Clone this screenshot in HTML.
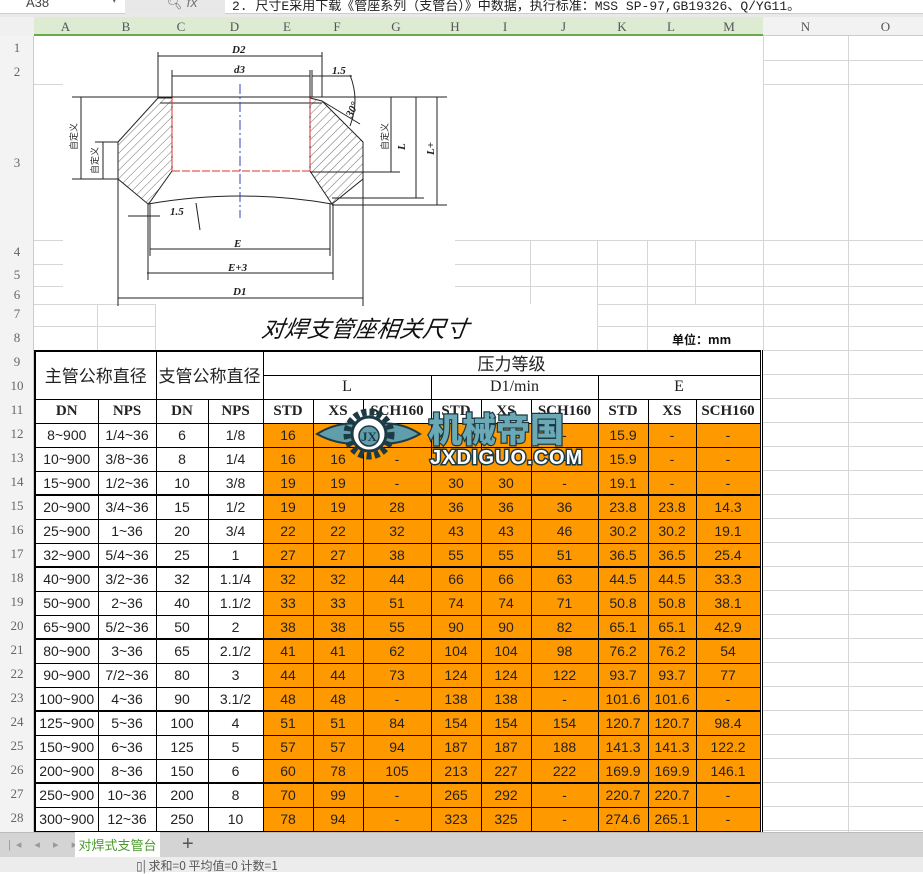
<!DOCTYPE html>
<html><head><meta charset="utf-8">
<style>
*{margin:0;padding:0;box-sizing:border-box}
body{width:923px;height:872px;overflow:hidden;background:#fff;position:relative;font-family:"Liberation Sans","Noto Sans CJK SC",sans-serif}
.abs{position:absolute}
.gl{position:absolute;background:#d6d6d6}
table{border-collapse:collapse;table-layout:fixed;position:absolute;left:34px;top:350px;border:2px solid #000;border-right:3px double #000}
td{border:1px solid #000;height:24px;line-height:18px;text-align:center;font-size:14px;color:#222;white-space:nowrap;overflow:hidden;padding:0;font-family:"Liberation Sans","Noto Sans CJK SC",sans-serif}
td.o{background:#FF9900}
.h1{font-size:17px;line-height:18px;font-family:"Noto Sans CJK SC",sans-serif}
.hs{font-family:"Liberation Serif",serif;font-size:15px;font-weight:bold}
.hl{font-family:"Liberation Serif",serif;font-size:16px}
tr.t td{border-top:2px solid #000}
.rh{position:absolute;left:0;width:34px;text-align:center;font-size:13px;color:#666;font-family:"Liberation Serif",serif}
.ch{position:absolute;top:17px;height:19px;text-align:center;font-size:13px;color:#555;font-family:"Liberation Serif",serif;line-height:19px}
</style></head><body>
<div class="abs" style="left:0;top:0;width:923px;height:14px;background:#fff;border-bottom:1px solid #ccc"></div>
<div class="abs" style="left:125px;top:0;width:100px;height:14px;background:#e8e8e8"></div>
<div class="abs" style="left:26px;top:-5px;font-size:13px;color:#444">A38</div>
<div class="abs" style="left:112px;top:-5px;font-size:9px;color:#666">▾</div>
<div class="abs" style="left:165px;top:-6px;font-size:14px;color:#777;font-style:italic">🔍︎ fx</div>
<div class="abs" style="left:232px;top:-5px;font-size:13px;color:#222;font-family:'Liberation Mono','Noto Sans CJK SC',monospace;white-space:nowrap">2. 尺寸E采用下载《管座系列（支管台）》中数据，执行标准：MSS SP-97,GB19326、Q/YG11。</div>
<div class="abs" style="left:0;top:14px;width:923px;height:3px;background:#e9e9e9"></div>
<div class="abs" style="left:0;top:17px;width:34px;height:19px;background:#f0f0f0"></div>
<div class="abs" style="left:34px;top:17px;width:729px;height:19px;background:#dcebd1;border-bottom:2px solid #6aa84f"></div>
<div class="abs" style="left:763px;top:17px;width:160px;height:19px;background:#f2f2f2;border-bottom:1px solid #ccc"></div>
<div class="ch" style="left:34px;width:63px">A</div><div class="ch" style="left:97px;width:58px">B</div><div class="ch" style="left:155px;width:52px">C</div><div class="ch" style="left:207px;width:55px">D</div><div class="ch" style="left:262px;width:50px">E</div><div class="ch" style="left:312px;width:50px">F</div><div class="ch" style="left:362px;width:68px">G</div><div class="ch" style="left:430px;width:50px">H</div><div class="ch" style="left:480px;width:50px">I</div><div class="ch" style="left:530px;width:67px">J</div><div class="ch" style="left:597px;width:50px">K</div><div class="ch" style="left:647px;width:48px">L</div><div class="ch" style="left:695px;width:68px">M</div><div class="ch" style="left:763px;width:85px">N</div><div class="ch" style="left:848px;width:75px">O</div>
<div class="abs" style="left:0;top:36px;width:34px;height:796px;background:#f3f3f3;border-right:1px solid #ccc"></div>
<div class="rh" style="top:40px">1</div><div class="rh" style="top:64px">2</div><div class="rh" style="top:155px">3</div><div class="rh" style="top:244px">4</div><div class="rh" style="top:267px">5</div><div class="rh" style="top:287px">6</div><div class="rh" style="top:306px">7</div><div class="rh" style="top:330px">8</div>
<div class="rh" style="top:354px">9</div><div class="rh" style="top:378px">10</div><div class="rh" style="top:402px">11</div>
<div class="rh" style="top:426px">12</div><div class="rh" style="top:450px">13</div><div class="rh" style="top:474px">14</div><div class="rh" style="top:498px">15</div><div class="rh" style="top:522px">16</div><div class="rh" style="top:546px">17</div><div class="rh" style="top:570px">18</div><div class="rh" style="top:594px">19</div><div class="rh" style="top:618px">20</div><div class="rh" style="top:642px">21</div><div class="rh" style="top:666px">22</div><div class="rh" style="top:690px">23</div><div class="rh" style="top:714px">24</div><div class="rh" style="top:738px">25</div><div class="rh" style="top:762px">26</div><div class="rh" style="top:786px">27</div><div class="rh" style="top:810px">28</div>
<div class="gl" style="left:848px;top:36px;width:1px;height:796px"></div>
<div class="gl" style="left:763px;top:36px;width:1px;height:314px"></div>
<div class="gl" style="left:763px;top:60px;width:160px;height:1px"></div><div class="gl" style="left:763px;top:84px;width:160px;height:1px"></div>
<div class="gl" style="left:455px;top:240px;width:468px;height:1px"></div><div class="gl" style="left:455px;top:264px;width:468px;height:1px"></div><div class="gl" style="left:455px;top:286px;width:468px;height:1px"></div><div class="gl" style="left:597px;top:304px;width:326px;height:1px"></div><div class="gl" style="left:597px;top:326px;width:326px;height:1px"></div>
<div class="gl" style="left:34px;top:304px;width:121px;height:1px"></div><div class="gl" style="left:34px;top:326px;width:121px;height:1px"></div>
<div class="gl" style="left:97px;top:304px;width:1px;height:46px"></div><div class="gl" style="left:155px;top:304px;width:1px;height:46px"></div>
<div class="gl" style="left:34px;top:84px;width:29px;height:1px"></div><div class="gl" style="left:34px;top:240px;width:29px;height:1px"></div><div class="gl" style="left:34px;top:264px;width:29px;height:1px"></div><div class="gl" style="left:34px;top:286px;width:29px;height:1px"></div>
<div class="gl" style="left:530px;top:240px;width:1px;height:64px"></div><div class="gl" style="left:597px;top:240px;width:1px;height:110px"></div><div class="gl" style="left:647px;top:240px;width:1px;height:110px"></div><div class="gl" style="left:695px;top:240px;width:1px;height:64px"></div>
<div class="gl" style="left:763px;top:350px;width:160px;height:1px"></div>
<div class="gl" style="left:763px;top:374px;width:160px;height:1px"></div><div class="gl" style="left:763px;top:398px;width:160px;height:1px"></div><div class="gl" style="left:763px;top:422px;width:160px;height:1px"></div><div class="gl" style="left:763px;top:446px;width:160px;height:1px"></div><div class="gl" style="left:763px;top:470px;width:160px;height:1px"></div><div class="gl" style="left:763px;top:494px;width:160px;height:1px"></div><div class="gl" style="left:763px;top:518px;width:160px;height:1px"></div><div class="gl" style="left:763px;top:542px;width:160px;height:1px"></div><div class="gl" style="left:763px;top:566px;width:160px;height:1px"></div><div class="gl" style="left:763px;top:590px;width:160px;height:1px"></div><div class="gl" style="left:763px;top:614px;width:160px;height:1px"></div><div class="gl" style="left:763px;top:638px;width:160px;height:1px"></div><div class="gl" style="left:763px;top:662px;width:160px;height:1px"></div><div class="gl" style="left:763px;top:686px;width:160px;height:1px"></div><div class="gl" style="left:763px;top:710px;width:160px;height:1px"></div><div class="gl" style="left:763px;top:734px;width:160px;height:1px"></div><div class="gl" style="left:763px;top:758px;width:160px;height:1px"></div><div class="gl" style="left:763px;top:782px;width:160px;height:1px"></div><div class="gl" style="left:763px;top:806px;width:160px;height:1px"></div><div class="gl" style="left:763px;top:830px;width:160px;height:1px"></div>
<svg class="abs" style="left:0;top:0" width="923" height="350" viewBox="0 0 923 350">
<defs><pattern id="h" width="6" height="6" patternUnits="userSpaceOnUse" patternTransform="rotate(45)"><line x1="0" y1="0" x2="0" y2="6" stroke="#333" stroke-width="0.7"/></pattern></defs>
<g stroke="#222" stroke-width="1" fill="none">
<polygon points="158,98 172,98 172,171 150,202 148,204 118,179 118,142" fill="url(#h)"/>
<polygon points="310,98 322,101 363,142 363,179 332,204 310,171" fill="url(#h)"/>
<path d="M148,204 Q240,188 332,204"/>
<line x1="72" y1="97" x2="447" y2="97"/><line x1="160" y1="103" x2="322" y2="103"/>
<line x1="72" y1="179" x2="118" y2="179"/><line x1="310" y1="172" x2="400" y2="172"/>
<line x1="332" y1="198" x2="424" y2="198"/><line x1="332" y1="205" x2="447" y2="205"/>
<line x1="158" y1="52" x2="158" y2="97"/><line x1="322" y1="52" x2="322" y2="97"/>
<line x1="172" y1="70" x2="172" y2="97"/><line x1="310" y1="70" x2="310" y2="97"/><line x1="312" y1="70" x2="312" y2="97"/>
<line x1="158" y1="56" x2="322" y2="56"/><line x1="172" y1="76" x2="310" y2="76"/><line x1="312" y1="76" x2="352" y2="76"/>
<line x1="81" y1="97" x2="81" y2="179"/><line x1="103" y1="142" x2="103" y2="179"/><line x1="95" y1="142" x2="118" y2="142"/>
<line x1="391" y1="97" x2="391" y2="172"/><line x1="416" y1="97" x2="416" y2="198"/><line x1="437" y1="97" x2="437" y2="205"/>
<line x1="148" y1="204" x2="148" y2="280"/><line x1="150" y1="204" x2="150" y2="256"/><line x1="330" y1="204" x2="330" y2="256"/><line x1="333" y1="204" x2="333" y2="280"/>
<line x1="118" y1="179" x2="118" y2="306"/><line x1="363" y1="179" x2="363" y2="306"/>
<line x1="150" y1="249" x2="330" y2="249"/><line x1="147" y1="273" x2="333" y2="273"/><line x1="118" y1="298" x2="363" y2="298"/>
<line x1="128" y1="216" x2="160" y2="216"/>
<line x1="196" y1="203" x2="200" y2="230"/>
<path d="M350,75 Q360,100 350,126"/><line x1="322" y1="101" x2="360" y2="124"/>
</g>
<g stroke="#e03030" stroke-width="1" stroke-dasharray="8,2"><line x1="172" y1="98" x2="172" y2="171"/><line x1="310" y1="98" x2="310" y2="171"/><line x1="172" y1="171" x2="310" y2="171"/></g>
<line x1="240" y1="84" x2="240" y2="218" stroke="#3040c0" stroke-dasharray="10,3,2,3"/>
<g font-family="Liberation Serif,serif" font-style="italic" font-weight="bold" font-size="11" fill="#222">
<text x="232" y="53">D2</text><text x="234" y="73">d3</text><text x="332" y="74">1.5</text><text x="170" y="215">1.5</text>
<text x="234" y="247">E</text><text x="228" y="271">E+3</text><text x="233" y="295">D1</text>
<text x="405" y="150" transform="rotate(-90 405,150)">L</text><text x="434" y="155" transform="rotate(-90 434,155)">L+</text>
<text x="352" y="118" transform="rotate(-65 352,118)">30°</text>
</g>
<g font-family="Noto Sans CJK SC,sans-serif" font-size="9" fill="#222">
<text x="77" y="150" transform="rotate(-90 77,150)">自定义</text><text x="98" y="174" transform="rotate(-90 98,174)">自定义</text><text x="388" y="150" transform="rotate(-90 388,150)">自定义</text>
</g>
<text x="262" y="337" font-family="Noto Sans CJK SC,sans-serif" font-style="italic" font-size="23" fill="#111" transform="skewX(-8) translate(46,0)">对焊支管座相关尺寸</text>
<text x="672" y="344" font-family="Noto Sans CJK SC,sans-serif" font-weight="bold" font-size="12" fill="#111">单位：mm</text>
</svg>
<table>
<colgroup><col style="width:63px"><col style="width:58px"><col style="width:52px"><col style="width:55px"><col style="width:50px"><col style="width:50px"><col style="width:68px"><col style="width:50px"><col style="width:50px"><col style="width:67px"><col style="width:50px"><col style="width:48px"><col style="width:65px"></colgroup>
<tr><td class="h1" colspan="2" rowspan="2">主管公称直径</td><td class="h1" colspan="2" rowspan="2">支管公称直径</td><td class="h1" colspan="9">压力等级</td></tr>
<tr><td class="hl" colspan="3">L</td><td class="hl" colspan="3">D1/min</td><td class="hl" colspan="3">E</td></tr>
<tr><td class="hs">DN</td><td class="hs">NPS</td><td class="hs">DN</td><td class="hs">NPS</td><td class="hs">STD</td><td class="hs">XS</td><td class="hs">SCH160</td><td class="hs">STD</td><td class="hs">XS</td><td class="hs">SCH160</td><td class="hs">STD</td><td class="hs">XS</td><td class="hs">SCH160</td></tr>
<tr><td>8~900</td><td>1/4~36</td><td>6</td><td>1/8</td><td class="o">16</td><td class="o">16</td><td class="o">-</td><td class="o"></td><td class="o"></td><td class="o">-</td><td class="o">15.9</td><td class="o">-</td><td class="o">-</td></tr>
<tr><td>10~900</td><td>3/8~36</td><td>8</td><td>1/4</td><td class="o">16</td><td class="o">16</td><td class="o">-</td><td class="o"></td><td class="o"></td><td class="o">-</td><td class="o">15.9</td><td class="o">-</td><td class="o">-</td></tr>
<tr><td>15~900</td><td>1/2~36</td><td>10</td><td>3/8</td><td class="o">19</td><td class="o">19</td><td class="o">-</td><td class="o">30</td><td class="o">30</td><td class="o">-</td><td class="o">19.1</td><td class="o">-</td><td class="o">-</td></tr>
<tr class="t"><td>20~900</td><td>3/4~36</td><td>15</td><td>1/2</td><td class="o">19</td><td class="o">19</td><td class="o">28</td><td class="o">36</td><td class="o">36</td><td class="o">36</td><td class="o">23.8</td><td class="o">23.8</td><td class="o">14.3</td></tr>
<tr><td>25~900</td><td>1~36</td><td>20</td><td>3/4</td><td class="o">22</td><td class="o">22</td><td class="o">32</td><td class="o">43</td><td class="o">43</td><td class="o">46</td><td class="o">30.2</td><td class="o">30.2</td><td class="o">19.1</td></tr>
<tr><td>32~900</td><td>5/4~36</td><td>25</td><td>1</td><td class="o">27</td><td class="o">27</td><td class="o">38</td><td class="o">55</td><td class="o">55</td><td class="o">51</td><td class="o">36.5</td><td class="o">36.5</td><td class="o">25.4</td></tr>
<tr class="t"><td>40~900</td><td>3/2~36</td><td>32</td><td>1.1/4</td><td class="o">32</td><td class="o">32</td><td class="o">44</td><td class="o">66</td><td class="o">66</td><td class="o">63</td><td class="o">44.5</td><td class="o">44.5</td><td class="o">33.3</td></tr>
<tr><td>50~900</td><td>2~36</td><td>40</td><td>1.1/2</td><td class="o">33</td><td class="o">33</td><td class="o">51</td><td class="o">74</td><td class="o">74</td><td class="o">71</td><td class="o">50.8</td><td class="o">50.8</td><td class="o">38.1</td></tr>
<tr><td>65~900</td><td>5/2~36</td><td>50</td><td>2</td><td class="o">38</td><td class="o">38</td><td class="o">55</td><td class="o">90</td><td class="o">90</td><td class="o">82</td><td class="o">65.1</td><td class="o">65.1</td><td class="o">42.9</td></tr>
<tr class="t"><td>80~900</td><td>3~36</td><td>65</td><td>2.1/2</td><td class="o">41</td><td class="o">41</td><td class="o">62</td><td class="o">104</td><td class="o">104</td><td class="o">98</td><td class="o">76.2</td><td class="o">76.2</td><td class="o">54</td></tr>
<tr><td>90~900</td><td>7/2~36</td><td>80</td><td>3</td><td class="o">44</td><td class="o">44</td><td class="o">73</td><td class="o">124</td><td class="o">124</td><td class="o">122</td><td class="o">93.7</td><td class="o">93.7</td><td class="o">77</td></tr>
<tr><td>100~900</td><td>4~36</td><td>90</td><td>3.1/2</td><td class="o">48</td><td class="o">48</td><td class="o">-</td><td class="o">138</td><td class="o">138</td><td class="o">-</td><td class="o">101.6</td><td class="o">101.6</td><td class="o">-</td></tr>
<tr class="t"><td>125~900</td><td>5~36</td><td>100</td><td>4</td><td class="o">51</td><td class="o">51</td><td class="o">84</td><td class="o">154</td><td class="o">154</td><td class="o">154</td><td class="o">120.7</td><td class="o">120.7</td><td class="o">98.4</td></tr>
<tr><td>150~900</td><td>6~36</td><td>125</td><td>5</td><td class="o">57</td><td class="o">57</td><td class="o">94</td><td class="o">187</td><td class="o">187</td><td class="o">188</td><td class="o">141.3</td><td class="o">141.3</td><td class="o">122.2</td></tr>
<tr><td>200~900</td><td>8~36</td><td>150</td><td>6</td><td class="o">60</td><td class="o">78</td><td class="o">105</td><td class="o">213</td><td class="o">227</td><td class="o">222</td><td class="o">169.9</td><td class="o">169.9</td><td class="o">146.1</td></tr>
<tr class="t"><td>250~900</td><td>10~36</td><td>200</td><td>8</td><td class="o">70</td><td class="o">99</td><td class="o">-</td><td class="o">265</td><td class="o">292</td><td class="o">-</td><td class="o">220.7</td><td class="o">220.7</td><td class="o">-</td></tr>
<tr><td>300~900</td><td>12~36</td><td>250</td><td>10</td><td class="o">78</td><td class="o">94</td><td class="o">-</td><td class="o">323</td><td class="o">325</td><td class="o">-</td><td class="o">274.6</td><td class="o">265.1</td><td class="o">-</td></tr>
<tr><td></td><td></td><td></td><td></td><td class="o"></td><td class="o"></td><td class="o"></td><td class="o"></td><td class="o"></td><td class="o"></td><td class="o"></td><td class="o"></td><td class="o"></td></tr>
</table>
<svg class="abs" style="left:312px;top:404px" width="300" height="62" viewBox="0 0 300 62">
<path d="M5,30 Q30,14 62,22 L62,38 Q30,44 5,30Z" fill="#5f9eaa" stroke="#1d3a44" stroke-width="2"/>
<path d="M108,30 Q84,14 52,22 L52,38 Q84,44 108,30Z" fill="#5f9eaa" stroke="#1d3a44" stroke-width="2"/>
<circle cx="57" cy="30" r="22" fill="none" stroke="#1d3a44" stroke-width="7" stroke-dasharray="5,3"/>
<circle cx="57" cy="30" r="17" fill="#fff" stroke="#1d3a44" stroke-width="3"/>
<circle cx="57" cy="32" r="10" fill="#5f9eaa" stroke="#1d3a44" stroke-width="1.5"/>
<text x="49" y="37" font-family="Liberation Serif,serif" font-weight="bold" font-size="13" fill="#1d3a44">JX</text>
<text x="116" y="38" font-family="Noto Sans CJK SC,sans-serif" font-weight="900" font-size="34" fill="#6aa9b5" stroke="#1d3a44" stroke-width="2.5" paint-order="stroke">机械帝国</text>
<text x="118" y="60" font-family="Liberation Sans,sans-serif" font-weight="bold" font-size="20" fill="#fff" stroke="#1d3a44" stroke-width="3" paint-order="stroke" letter-spacing="1">JXDIGUO.COM</text>
</svg>
<div class="abs" style="left:0;top:832px;width:923px;height:25px;background:#d4d4d4;border-top:1px solid #bbb"></div>
<div class="abs" style="left:8px;top:838px;font-size:11px;color:#999;letter-spacing:5px">|◂ ◂ ▸ ▸|</div>
<div class="abs" style="left:75px;top:832px;width:85px;height:25px;background:#fff;color:#4a9a2a;font-size:13px;text-align:center;line-height:25px;font-family:'Noto Sans CJK SC',sans-serif">对焊式支管台</div>
<div class="abs" style="left:182px;top:833px;font-size:20px;color:#555">+</div>
<div class="abs" style="left:0;top:857px;width:923px;height:15px;background:#ececec"></div>
<div class="abs" style="left:136px;top:860px;font-size:12px;color:#555;font-family:'Noto Sans CJK SC',sans-serif;line-height:12px">▯| 求和=0 平均值=0 计数=1</div>
</body></html>
